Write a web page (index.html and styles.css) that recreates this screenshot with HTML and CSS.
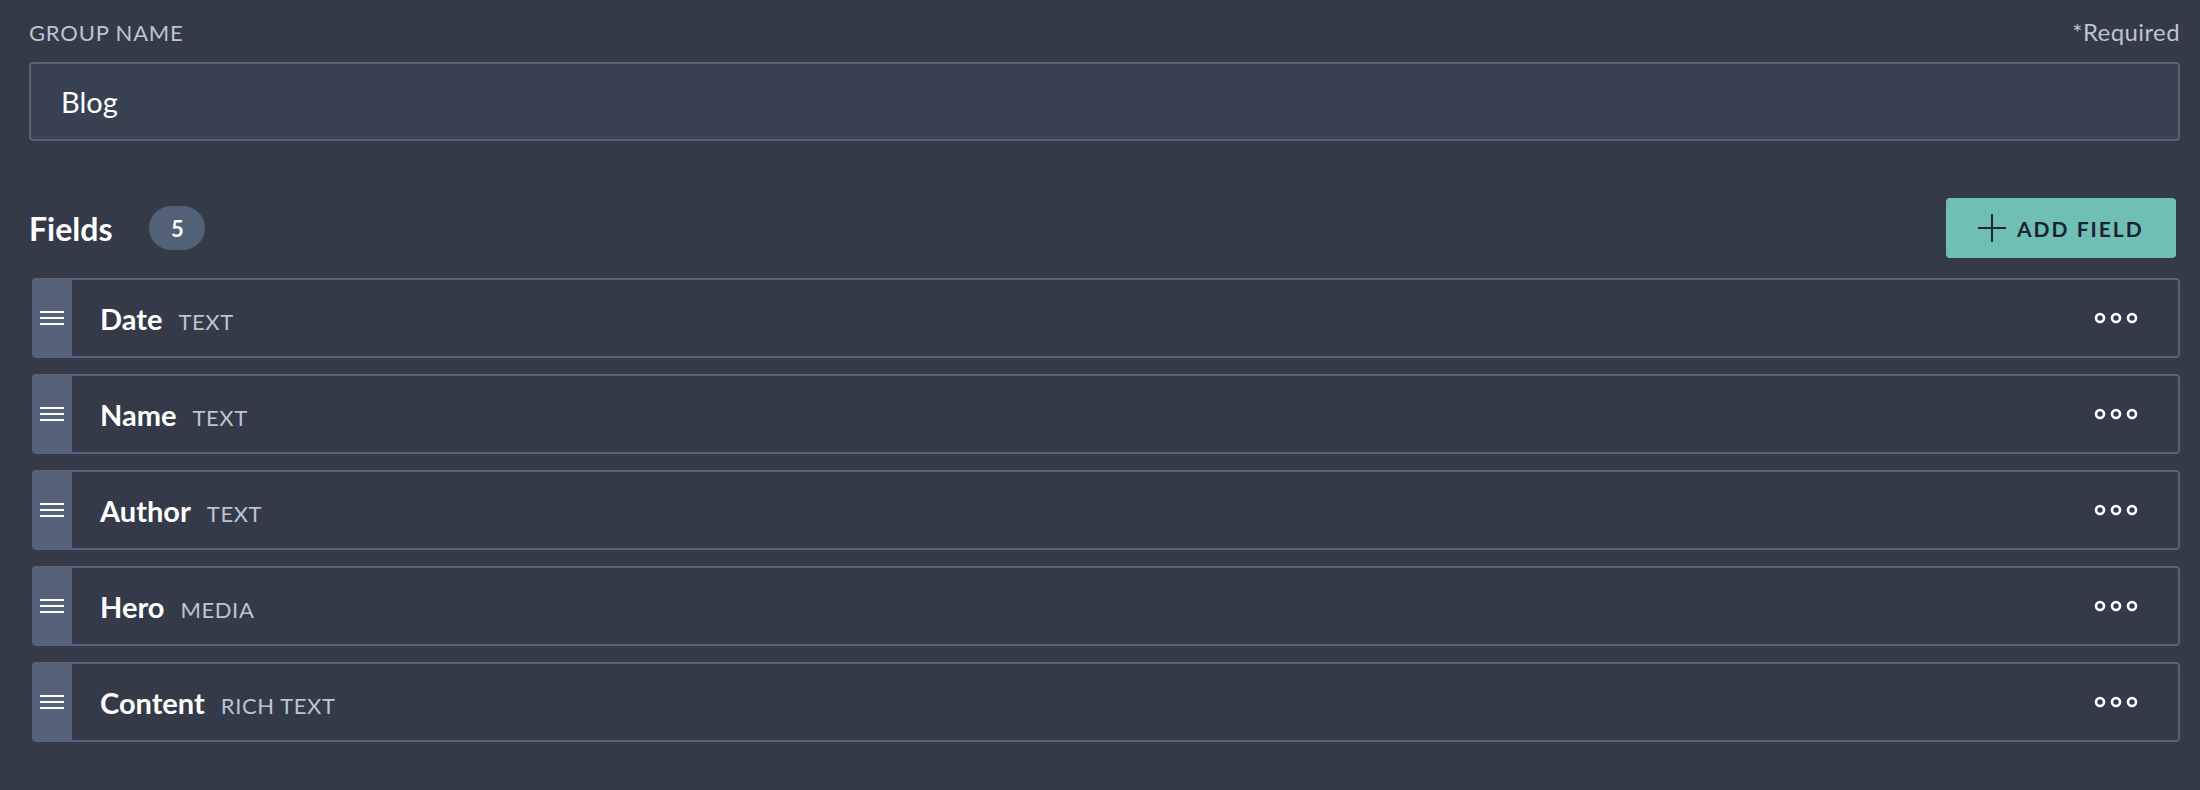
FILE: index.html
```html
<!DOCTYPE html>
<html lang="en">

<head>
    <meta charset="UTF-8">
    <meta name="viewport" content="width=device-width, initial-scale=1.0">
    <title>Edit Group</title>
    <link rel="stylesheet" href="styles.css">
</head>

<body>
    <div class="editor">
        <div class="label-row">
            <label for="group-name">GROUP NAME</label>
            <span class="required">*Required</span>
        </div>
        <input type="text" id="group-name" class="text-input" value="Blog">

        <div class="fields-header">
            <h2>Fields</h2>
            <span class="count">5</span>
            <button class="add-btn">
                <svg width="28" height="28" viewBox="0 0 28 28">
                    <path d="M14 0V28M0 14H28" stroke="#1d2633" stroke-width="2" fill="none" />
                </svg>
                ADD FIELD
            </button>
        </div>

        <ul class="field-list">
            <li class="field-row">
                <span class="handle">
                    <svg width="24" height="14" viewBox="0 0 24 14">
                        <path d="M0 1H24M0 7H24M0 13H24" stroke="#fff" stroke-width="2" fill="none" />
                    </svg>
                </span>
                <div class="field-info"><strong>Date</strong><span class="type">TEXT</span></div>
                <button class="more">
                    <svg width="44" height="12" viewBox="0 0 44 12">
                        <circle cx="6" cy="6" r="4" />
                        <circle cx="22" cy="6" r="4" />
                        <circle cx="38" cy="6" r="4" />
                    </svg>
                </button>
            </li>
            <li class="field-row">
                <span class="handle">
                    <svg width="24" height="14" viewBox="0 0 24 14">
                        <path d="M0 1H24M0 7H24M0 13H24" stroke="#fff" stroke-width="2" fill="none" />
                    </svg>
                </span>
                <div class="field-info"><strong>Name</strong><span class="type">TEXT</span></div>
                <button class="more">
                    <svg width="44" height="12" viewBox="0 0 44 12">
                        <circle cx="6" cy="6" r="4" />
                        <circle cx="22" cy="6" r="4" />
                        <circle cx="38" cy="6" r="4" />
                    </svg>
                </button>
            </li>
            <li class="field-row">
                <span class="handle">
                    <svg width="24" height="14" viewBox="0 0 24 14">
                        <path d="M0 1H24M0 7H24M0 13H24" stroke="#fff" stroke-width="2" fill="none" />
                    </svg>
                </span>
                <div class="field-info"><strong>Author</strong><span class="type">TEXT</span></div>
                <button class="more">
                    <svg width="44" height="12" viewBox="0 0 44 12">
                        <circle cx="6" cy="6" r="4" />
                        <circle cx="22" cy="6" r="4" />
                        <circle cx="38" cy="6" r="4" />
                    </svg>
                </button>
            </li>
            <li class="field-row">
                <span class="handle">
                    <svg width="24" height="14" viewBox="0 0 24 14">
                        <path d="M0 1H24M0 7H24M0 13H24" stroke="#fff" stroke-width="2" fill="none" />
                    </svg>
                </span>
                <div class="field-info"><strong>Hero</strong><span class="type">MEDIA</span></div>
                <button class="more">
                    <svg width="44" height="12" viewBox="0 0 44 12">
                        <circle cx="6" cy="6" r="4" />
                        <circle cx="22" cy="6" r="4" />
                        <circle cx="38" cy="6" r="4" />
                    </svg>
                </button>
            </li>
            <li class="field-row">
                <span class="handle">
                    <svg width="24" height="14" viewBox="0 0 24 14">
                        <path d="M0 1H24M0 7H24M0 13H24" stroke="#fff" stroke-width="2" fill="none" />
                    </svg>
                </span>
                <div class="field-info"><strong>Content</strong><span class="type">RICH TEXT</span></div>
                <button class="more">
                    <svg width="44" height="12" viewBox="0 0 44 12">
                        <circle cx="6" cy="6" r="4" />
                        <circle cx="22" cy="6" r="4" />
                        <circle cx="38" cy="6" r="4" />
                    </svg>
                </button>
            </li>
        </ul>
    </div>
</body>

</html>
```

FILE: styles.css
```css
body {
    margin: 0;
    background-color: #343a48;
    font-family: Lato, 'Open Sans', sans-serif;
    color: #fff;
}

.editor {
    padding: 19px 20px 0 29px;
}

.label-row {
    display: flex;
    justify-content: space-between;
    align-items: baseline;
    height: 27px;
    font-size: 22px;
    line-height: 26px;
    color: #b9c5d5;
}

.label-row label {
    letter-spacing: 0.8px;
}

.required {
    font-size: 24px;
    letter-spacing: 0.4px;
}

.text-input {
    display: block;
    box-sizing: border-box;
    width: 100%;
    height: 79px;
    margin-top: 16px;
    padding: 0 30px;
    font-family: inherit;
    font-size: 29px;
    color: #fff;
    background-color: #384253;
    border: 2px solid #55627a;
    border-radius: 4px;
    outline: none;
}

.fields-header {
    display: flex;
    align-items: center;
    height: 60px;
    margin-top: 57px;
}

.fields-header h2 {
    margin: 0;
    font-size: 32px;
    font-weight: 700;
}

.count {
    display: flex;
    align-items: center;
    justify-content: center;
    width: 56px;
    height: 44px;
    margin-left: 37px;
    border-radius: 22px;
    background-color: #526078;
    font-size: 22px;
    font-weight: 700;
}

.add-btn {
    display: flex;
    align-items: center;
    gap: 11px;
    box-sizing: border-box;
    width: 230px;
    height: 60px;
    margin-left: auto;
    margin-right: 4px;
    padding: 0 0 0 32px;
    background-color: #70bfb5;
    color: #1b2330;
    border: none;
    border-radius: 4px;
    font-family: inherit;
    font-size: 21px;
    font-weight: 700;
    letter-spacing: 2px;
    cursor: pointer;
}

.field-list {
    list-style: none;
    margin: 20px 0 0 3px;
    padding: 0;
    display: flex;
    flex-direction: column;
    gap: 16px;
}

.field-row {
    display: flex;
    align-items: center;
    box-sizing: border-box;
    height: 80px;
    border: 2px solid #55627a;
    border-radius: 4px;
    overflow: hidden;
}

.handle {
    display: flex;
    align-items: center;
    justify-content: center;
    align-self: stretch;
    box-sizing: border-box;
    width: 38px;
    padding-right: 3px;
    background-color: #55627a;
}

.field-info {
    display: flex;
    align-items: baseline;
    gap: 16px;
    padding-left: 28px;
}

.field-info strong {
    font-size: 29px;
    font-weight: 700;
}

.type {
    font-size: 22px;
    letter-spacing: 0.6px;
    color: #b9c5d5;
}

.more {
    display: flex;
    margin-left: auto;
    margin-right: 40px;
    padding: 0;
    background: none;
    border: none;
    cursor: pointer;
}

.more circle {
    fill: none;
    stroke: #fff;
    stroke-width: 2.6;
}
```
